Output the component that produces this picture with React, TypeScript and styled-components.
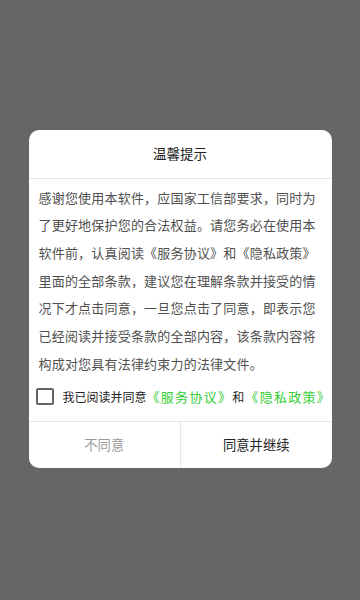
import React, { useState } from 'react'
import styled, { createGlobalStyle } from 'styled-components'

const COLORS = {
  mask: '#666666',
  white: '#ffffff',
  title: '#222222',
  text: '#505050',
  line: '#e6e6e6',
  muted: '#9a9a9a',
  green: '#33cc33',
  box: '#666666',
}

const GlobalStyle = createGlobalStyle`
  html, body {
    margin: 0;
    padding: 0;
    background: ${COLORS.mask};
  }
  body {
    font-family: "Noto Sans CJK SC", "Noto Sans", sans-serif;
  }
`

const Screen = styled.div`
  display: flex;
  align-items: center;
  justify-content: center;
  width: 360px;
  height: 600px;
  background: ${COLORS.mask};
`

const Dialog = styled.div`
  display: flex;
  flex-direction: column;
  width: 303px;
  margin-top: -2px;
  background: ${COLORS.white};
  border-radius: 10px;
  overflow: hidden;
`

const Title = styled.h2`
  margin: 0;
  height: 48px;
  line-height: 47px;
  text-align: center;
  font-size: 13.5px;
  font-weight: 400;
  color: ${COLORS.title};
  border-bottom: 1px solid ${COLORS.line};
`

const Body = styled.p`
  margin: 0;
  padding: 5px 10px 0;
  font-size: 13px;
  letter-spacing: 0.2px;
  line-height: 27.7px;
  color: ${COLORS.text};
  text-align: left;
`

const CheckRow = styled.label`
  display: flex;
  align-items: center;
  height: 26px;
  padding: 6px 0 12px 7px;
  font-size: 12px;
  color: ${COLORS.title};
  white-space: nowrap;
  cursor: pointer;
`

const Box = styled.span<{ $checked: boolean }>`
  flex-shrink: 0;
  box-sizing: border-box;
  width: 18px;
  height: 17px;
  margin-right: 9px;
  border: 2px solid ${COLORS.box};
  border-radius: 2px;
  background: ${(p) => (p.$checked ? COLORS.green : COLORS.white)};
  border-color: ${(p) => (p.$checked ? COLORS.green : COLORS.box)};
`

const Link = styled.span`
  font-size: 13px;
  letter-spacing: 1.3px;
  color: ${COLORS.green};
`

const And = styled.span`
  margin: 0 1px 0 0;
`

const Footer = styled.div`
  display: grid;
  grid-template-columns: 1fr 1fr;
  height: 46px;
  border-top: 1px solid ${COLORS.line};
`

const Button = styled.button<{ $primary?: boolean }>`
  border: none;
  background: transparent;
  padding: 0 0 2px;
  font-family: inherit;
  font-size: 13.3px;
  color: ${(p) => (p.$primary ? COLORS.title : COLORS.muted)};
  & + & {
    border-left: 1px solid ${COLORS.line};
  }
`

function App() {
  const [checked, setChecked] = useState(false)
  return (
    <>
      <GlobalStyle />
      <Screen>
        <Dialog>
          <Title>温馨提示</Title>
          <Body>
            感谢您使用本软件，应国家工信部要求，同时为了更好地保护您的合法权益。请您务必在使用本软件前，认真阅读《服务协议》和《隐私政策》里面的全部条款，建议您在理解条款并接受的情况下才点击同意，一旦您点击了同意，即表示您已经阅读并接受条款的全部内容，该条款内容将构成对您具有法律约束力的法律文件。
          </Body>
          <CheckRow onClick={() => setChecked(!checked)}>
            <Box $checked={checked} />
            我已阅读并同意
            <Link>《服务协议》</Link>
            <And>和</And>
            <Link>《隐私政策》</Link>
          </CheckRow>
          <Footer>
            <Button>不同意</Button>
            <Button $primary>同意并继续</Button>
          </Footer>
        </Dialog>
      </Screen>
    </>
  )
}

export default App
